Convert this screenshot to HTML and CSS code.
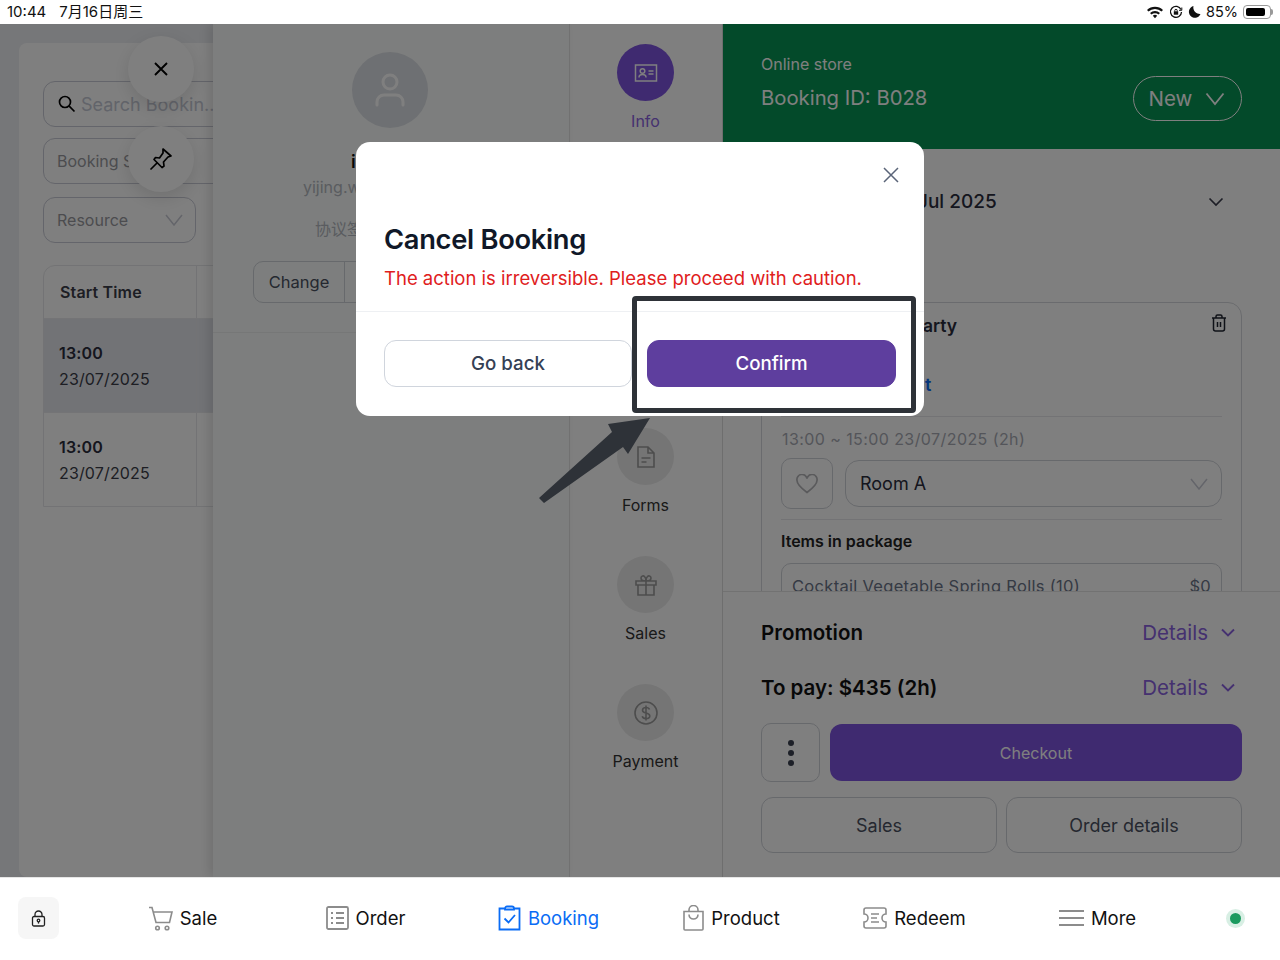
FILE: index.html
```html
<!DOCTYPE html>
<html lang="en">

<head>
  <meta charset="UTF-8" />
  <meta name="viewport" content="width=device-width, initial-scale=1.0" />
  <title>Cancel Booking</title>
  <link rel="stylesheet" href="styles.css">
</head>

<body>
  <div class="statusbar">
    <div class="status-left"><span>10:44</span><span>7月16日周三</span></div>
    <div class="status-right">
      <svg width="18" height="14" viewBox="0 0 18 14"><path d="M1 5a11.500 11.500 0 0 1 16 0l-1.500 1.600a9.300 9.300 0 0 0-13 0zM4 8a7.200 7.200 0 0 1 10 0l-1.500 1.600a5 5 0 0 0-7 0zM6.800 10.800a3.200 3.200 0 0 1 4.400 0L9 13.200z" fill="#111"/></svg>
      <svg width="14" height="14" viewBox="0 0 14 14" fill="none" stroke="#111"><path d="M12 4.500A5.500 5.500 0 1 0 12.500 7" stroke-width="1.300"/><path d="M12.800 2.500v2.800H10" stroke-width="1"/><rect x="4.800" y="6.300" width="4.400" height="3.400" fill="#111" stroke="none"/><path d="M5.800 6.500V5.500a1.200 1.200 0 0 1 2.400 0v1" stroke-width="1"/></svg>
      <svg width="13" height="14" viewBox="0 0 13 14"><path d="M5.500 1a6 6 0 1 0 7 8A6.500 6.500 0 0 1 5.500 1z" fill="#111"/></svg>
      <span>85%</span>
      <div class="battery"><div class="battery-level"></div></div>
    </div>
  </div>

  <div class="app">
    <aside class="sidebar">
      <div class="sidebar-panel">
        <div class="field search">
          <svg width="20" height="20" viewBox="0 0 20 20" fill="none" stroke="#000" stroke-width="1.700"><circle cx="8" cy="8" r="5.500"/><path d="M12.200 12.200l5.300 5.300"/></svg>
          <span class="placeholder">Search Bookin..</span>
        </div>
        <div class="field booking-field">Booking Status</div>
        <div class="field resource-field">
          <span>Resource</span>
          <svg class="select-arrow" width="18" height="12" viewBox="0 0 18 12" fill="none" stroke="#c8cad4" stroke-width="1.500"><path d="M1 1l8 10 8-10"/></svg>
        </div>
        <div class="table">
          <div class="table-row table-head">
            <div class="cell">Start Time</div>
            <div class="cell"></div>
          </div>
          <div class="table-row selected">
            <div class="cell"><b>13:00</b><span>23/07/2025</span></div>
            <div class="cell"></div>
          </div>
          <div class="table-row">
            <div class="cell"><b>13:00</b><span>23/07/2025</span></div>
            <div class="cell"></div>
          </div>
        </div>
      </div>
    </aside>

    <section class="profile">
      <div class="profile-top">
        <div class="avatar">
          <svg width="30" height="34" viewBox="0 0 30 34" fill="none" stroke="#fff" stroke-width="3" stroke-linecap="round"><circle cx="15" cy="9" r="7"/><path d="M2 32v-3a7 7 0 0 1 7-7h12a7 7 0 0 1 7 7v3"/></svg>
        </div>
        <div class="profile-name">i</div>
        <div class="profile-email">yijing.w</div>
        <div class="profile-note">协议签</div>
        <div class="btn-group"><div class="btn-part">Change</div><div class="btn-part wide"></div></div>
      </div>
    </section>

    <nav class="tabs">
      <div class="tab active">
        <div class="tab-circle">
          <svg width="24" height="20" viewBox="0 0 24 20" fill="none" stroke="#fff" stroke-width="1.500"><rect x="1.500" y="2" width="21" height="16"/><circle cx="8.500" cy="8" r="2.300"/><path d="M5 14.500c0-4 7-4 7 0M14.500 8h5M14.500 11h5"/></svg>
        </div>
        <span>Info</span>
      </div>
      <div class="tab"></div>
      <div class="tab"></div>
      <div class="tab">
        <div class="tab-circle">
          <svg width="20" height="24" viewBox="0 0 20 24" fill="none" stroke="#9a9a9a" stroke-width="1.600"><path d="M2 2h10l6 6v14H2zM12 2v6h6M5.500 13h9M5.500 17h5"/></svg>
        </div>
        <span>Forms</span>
      </div>
      <div class="tab">
        <div class="tab-circle">
          <svg width="22" height="22" viewBox="0 0 22 22" fill="none" stroke="#9a9a9a" stroke-width="1.600"><path d="M1 7h20v4H1zM3 11v10h16V11M11 7v14M11 7C7 7 6 5.500 6 4s2-3 3.500-1.500S11 7 11 7zM11 7c4 0 5-1.500 5-3s-2-3-3.500-1.500S11 7 11 7z"/></svg>
        </div>
        <span>Sales</span>
      </div>
      <div class="tab">
        <div class="tab-circle">
          <svg width="24" height="24" viewBox="0 0 24 24" fill="none" stroke="#9a9a9a" stroke-width="1.600"><circle cx="12" cy="12" r="11"/><path d="M15.500 8.500c-.5-1.500-2-2-3.500-2-2 0-3.500 1-3.500 2.700 0 3.800 7.300 2 7.300 5.700 0 1.700-1.700 2.600-3.800 2.600-1.800 0-3.300-.7-3.800-2.300M12 4.500v15"/></svg>
        </div>
        <span>Payment</span>
      </div>
    </nav>

    <main class="detail">
      <header class="detail-header">
        <div class="header-text">
          <div class="store-name">Online store</div>
          <div class="booking-id">Booking ID: B028</div>
        </div>
        <div class="new-btn">New
          <svg width="20" height="14" viewBox="0 0 20 14" fill="none" stroke="#fff" stroke-width="1.800"><path d="M1.500 1.500L10 12l8.500-10.500"/></svg>
        </div>
      </header>

      <div class="detail-scroll">
        <div class="date-row">
          <span>Jul 2025</span>
          <svg width="16" height="10" viewBox="0 0 16 10" fill="none" stroke="#3a3d4d" stroke-width="1.700"><path d="M1.500 1.500L8 8l6.500-6.500"/></svg>
        </div>
        <div class="card">
          <div class="card-title">
            <span>arty</span>
            <svg width="16" height="18" viewBox="0 0 16 18" fill="none" stroke="#1f2430" stroke-width="1.500"><path d="M1 4h14M5 4V2.500A1.500 1.500 0 0 1 6.500 1h3A1.500 1.500 0 0 1 11 2.500V4M2.500 4v11A2 2 0 0 0 4.500 17h7a2 2 0 0 0 2-2V4M6.500 8v5M9.500 8v5"/></svg>
          </div>
          <div class="card-link">t</div>
          <div class="card-time">13:00 ~ 15:00 23/07/2025 (2h)</div>
          <div class="room-row">
            <div class="heart-btn">
              <svg width="22" height="20" viewBox="0 0 22 20" fill="none" stroke="#b5b5b8" stroke-width="1.700"><path d="M11 18.500C5 14 1 10.500 1 6.500A5 5 0 0 1 11 4.500 5 5 0 0 1 21 6.500C21 10.500 17 14 11 18.500z"/></svg>
            </div>
            <div class="room-select">
              <span>Room A</span>
              <svg class="select-arrow" width="18" height="12" viewBox="0 0 18 12" fill="none" stroke="#c8cad4" stroke-width="1.500"><path d="M1 1l8 10 8-10"/></svg>
            </div>
          </div>
          <div class="items-title">Items in package</div>
          <div class="item-box"><span>Cocktail Vegetable Spring Rolls (10)</span><span>$0</span></div>
        </div>
      </div>

      <div class="detail-footer">
        <div class="sum-row">
          <span>Promotion</span>
          <div class="details-link">Details
            <svg width="14" height="9" viewBox="0 0 14 9" fill="none" stroke="#8a62e0" stroke-width="1.900"><path d="M1 1.500l6 6 6-6"/></svg>
          </div>
        </div>
        <div class="sum-row">
          <span>To pay: $435 (2h)</span>
          <div class="details-link">Details
            <svg width="14" height="9" viewBox="0 0 14 9" fill="none" stroke="#8a62e0" stroke-width="1.900"><path d="M1 1.500l6 6 6-6"/></svg>
          </div>
        </div>
        <div class="action-row">
          <div class="more-btn"><i></i><i></i><i></i></div>
          <div class="checkout-btn">Checkout</div>
        </div>
        <div class="second-row">
          <div class="second-btn">Sales</div>
          <div class="second-btn">Order details</div>
        </div>
      </div>
    </main>

    <div class="float-btn close-float">
      <svg width="16" height="16" viewBox="0 0 16 16" fill="none" stroke="#000" stroke-width="1.900"><path d="M2 2l12 12M14 2L2 14"/></svg>
    </div>
    <div class="float-btn pin-float">
      <svg width="24" height="24" viewBox="0 0 24 24" fill="none" stroke="#000" stroke-width="1.700" stroke-linejoin="round" stroke-linecap="round"><path d="M14 2l8 7-3 1-4.500 5 .5 4-2 1.500-8-8L6.500 10.500l4 .5L14 6z"/><path d="M8 16l-6 6"/></svg>
    </div>

    <div class="overlay"></div>
  </div>

  <div class="bottom-nav">
    <div class="lock-btn">
      <svg width="15" height="17" viewBox="0 0 15 17" fill="none" stroke="#222" stroke-width="1.300"><rect x="1.500" y="6.500" width="12" height="9.500" rx="1.500"/><path d="M4 6.500V4.500a3.500 3.500 0 0 1 7 0v2"/><circle cx="7.500" cy="10.500" r="1.300"/><path d="M7.500 11.800v1.800"/></svg>
    </div>
    <div class="nav-items">
      <div class="nav-item">
        <svg width="25" height="25" viewBox="0 0 25 25" fill="none" stroke="#8c8c8c" stroke-width="1.600"><path d="M1 1.500h3l4 15h13.500L24 6H5.500"/><circle cx="9.500" cy="22" r="1.800"/><circle cx="19" cy="22" r="1.800"/></svg>
        <span>Sale</span>
      </div>
      <div class="nav-item">
        <svg width="23" height="24" viewBox="0 0 23 24" fill="none" stroke="#8c8c8c" stroke-width="1.800"><rect x="1" y="1" width="21" height="22" rx="1.500"/><path d="M5 7h2M10 7h8M5 12h2M10 12h8M5 17h2M10 17h8"/></svg>
        <span>Order</span>
      </div>
      <div class="nav-item current">
        <svg width="23" height="26" viewBox="0 0 23 26" fill="none" stroke="#0a6cf5" stroke-width="1.800"><path d="M7 3.500H1.500v21h20v-21H16M7 3.500a2 2 0 0 1 2-2h5a2 2 0 0 1 2 2v1H7z"/><path d="M6.500 13.500l4 4 6.500-7.500"/></svg>
        <span>Booking</span>
      </div>
      <div class="nav-item">
        <svg width="21" height="26" viewBox="0 0 21 26" fill="none" stroke="#8c8c8c" stroke-width="1.600"><path d="M1 6.500h19V24a1 1 0 0 1-1 1H2a1 1 0 0 1-1-1zM6 6.500V5a4.500 4.500 0 0 1 9 0v1.500M6 9.500c0 6 9 6 9 0"/></svg>
        <span>Product</span>
      </div>
      <div class="nav-item">
        <svg width="24" height="22" viewBox="0 0 24 22" fill="none" stroke="#8c8c8c" stroke-width="1.600"><path d="M3 1h18a2 2 0 0 1 2 2v4a4 4 0 0 0 0 8v4a2 2 0 0 1-2 2H3a2 2 0 0 1-2-2v-4a4 4 0 0 0 0-8V3a2 2 0 0 1 2-2zM8 7h8M8 11h6M8 15h8"/></svg>
        <span>Redeem</span>
      </div>
      <div class="nav-item">
        <svg width="25" height="18" viewBox="0 0 25 18" fill="none" stroke="#8c8c8c" stroke-width="1.800"><path d="M0 2h25M0 9h25M0 16h25"/></svg>
        <span>More</span>
      </div>
    </div>
    <div class="online-dot"></div>
  </div>

  <div class="modal">
    <div class="modal-top">
      <svg class="modal-close" width="16" height="16" viewBox="0 0 16 16" fill="none" stroke="#5a6478" stroke-width="1.500"><path d="M1 1l14 14M15 1L1 15"/></svg>
      <h2>Cancel Booking</h2>
      <p>The action is irreversible. Please proceed with caution.</p>
    </div>
    <div class="modal-actions">
      <button class="btn-back">Go back</button>
      <button class="btn-confirm">Confirm</button>
    </div>
  </div>

  <!-- annotation drawn on the screenshot -->
  <div class="mark-box"></div>
  <svg class="mark-arrow" width="1280" height="960" viewBox="0 0 1280 960"><polygon points="650,418 608,424 612,432 539,498 544,503 623,447 628,454" fill="#2e3238"/></svg>
</body>

</html>
```

FILE: styles.css
```css
* {
  box-sizing: border-box;
}

html,
body {
  margin: 0;
  height: 100%;
}

body {
  position: relative;
  width: 1280px;
  height: 960px;
  overflow: hidden;
  font-family: 'Inter', 'Noto Sans CJK SC', sans-serif;
  background: #fff;
  color: #000;
}

.statusbar {
  height: 24px;
  padding: 0 8px 0 7px;
  display: flex;
  justify-content: space-between;
  align-items: center;
  font-size: 15px;
  line-height: 24px;
  color: #111;
  background: #fff;
}

.status-left {
  display: flex;
  gap: 13px;
}

.status-right {
  display: flex;
  align-items: center;
  gap: 5px;
}

.status-right span {
  font-size: 14.500px;
}

.battery {
  position: relative;
  width: 28px;
  height: 14px;
  margin-right: 1px;
  padding: 2px;
  border: 1px solid #999;
  border-radius: 4px;
}

.battery::after {
  content: "";
  position: absolute;
  right: -3px;
  top: 3px;
  width: 2px;
  height: 6px;
  background: #999;
  border-radius: 0 2px 2px 0;
}

.battery-level {
  width: 85%;
  height: 100%;
  background: #000;
  border-radius: 2px;
}

.app {
  position: relative;
  height: 853px;
  display: flex;
  overflow: hidden;
}

.overlay {
  position: absolute;
  inset: 0;
  z-index: 5;
  background: rgba(0, 0, 0, 0.5);
}

/* left list */
.sidebar {
  width: 213px;
  flex-shrink: 0;
  padding: 19px 0 0 19px;
  overflow: hidden;
  background: #eceef2;
}

.sidebar-panel {
  width: 330px;
  height: 100%;
  padding: 38px 24px 0;
  background: #fff;
  border-radius: 8px 0 0 8px;
}

.field {
  height: 46px;
  padding: 0 13px;
  display: flex;
  align-items: center;
  font-size: 16px;
  color: #98999e;
  border: 1px solid #c9cbd6;
  border-radius: 12px;
}

.search {
  width: 240px;
  gap: 4px;
  margin-bottom: 11px;
}

.placeholder {
  font-size: 18px;
  color: #c4c8d4;
  white-space: nowrap;
}

.booking-field {
  width: 240px;
  margin-bottom: 13px;
}

.resource-field {
  width: 153px;
  margin-bottom: 22px;
  justify-content: space-between;
}

.select-arrow {
  margin-right: -1px;
}

.table {
  width: 300px;
  border: 1px solid #e6e7ea;
  border-radius: 12px 0 0 0;
  overflow: hidden;
}

.table-row {
  height: 94px;
  display: flex;
}

.table-row + .table-row {
  border-top: 1px solid #e8e9ec;
}

.table-head {
  height: 52px;
  font-size: 16px;
  font-weight: 600;
  color: #333;
}

.table-head .cell {
  padding: 0 0 0 16px;
}

.selected {
  background: #e4e6ec;
}

.cell {
  width: 153px;
  flex-shrink: 0;
  padding: 0 0 0 15px;
  display: flex;
  flex-direction: column;
  justify-content: center;
  gap: 6px;
  border-right: 1px solid #e6e7ea;
  font-size: 16px;
  color: #3a3c48;
  letter-spacing: 0.15px;
}

.cell b {
  font-weight: 600;
  color: #2a2c3c;
}

.cell:last-child {
  border-right: 0;
}

/* customer column */
.profile {
  position: relative;
  z-index: 1;
  width: 356px;
  flex-shrink: 0;
  background: #fafdfc;
  box-shadow: -4px 0 10px rgba(0, 0, 0, 0.12);
}

.profile-top {
  height: 309px;
  padding-top: 28px;
  border-bottom: 1px solid #eceeee;
}

.avatar {
  width: 76px;
  height: 76px;
  margin-left: 139px;
  display: flex;
  align-items: center;
  justify-content: center;
  background: #dde0e6;
  border-radius: 50%;
}

.profile-name {
  margin: 23px 0 0 138px;
  font-size: 18px;
  font-weight: 600;
  color: #111;
}

.profile-email {
  margin: 5px 0 0 90px;
  font-size: 16px;
  color: #b4b8c0;
}

.profile-note {
  margin: 19px 0 0 102px;
  font-size: 16px;
  color: #b4b8c0;
}

.btn-group {
  width: 276px;
  height: 42px;
  margin: 21px 0 0 40px;
  display: flex;
  font-size: 16.500px;
  color: #4a5060;
  border: 1px solid #cfd2d8;
  border-radius: 10px;
}

.btn-part {
  width: 91px;
  display: flex;
  align-items: center;
  justify-content: center;
  border-right: 1px solid #cfd2d8;
}

.wide {
  flex: 1;
  border-right: 0;
}

/* step tabs */
.tabs {
  width: 153px;
  flex-shrink: 0;
  padding: 20px 1px 0 0;
  background: #fff;
  border-left: 1px solid #e8e8e8;
}

.tab {
  height: 128px;
  display: flex;
  flex-direction: column;
  align-items: center;
  gap: 10px;
  font-size: 16px;
  color: #333;
}

.tab-circle {
  width: 57px;
  height: 57px;
  display: flex;
  align-items: center;
  justify-content: center;
  background: #ebebeb;
  border-radius: 50%;
}

.tab.active {
  color: #8a62e0;
}

.tab.active .tab-circle {
  background: #7e54e0;
}

/* booking detail */
.detail {
  flex: 1;
  display: flex;
  flex-direction: column;
  background: #fff;
  border-left: 1px solid #ddd;
}

.detail-header {
  height: 125px;
  padding: 0 38px;
  display: flex;
  align-items: center;
  justify-content: space-between;
  color: #fff;
  background: #069454;
}

.header-text {
  padding-bottom: 9px;
}

.store-name {
  font-size: 16px;
  margin-bottom: 11px;
}

.booking-id {
  font-size: 20.300px;
}

.new-btn {
  width: 109px;
  height: 45px;
  margin-top: 24px;
  padding-right: 1px;
  display: flex;
  align-items: center;
  justify-content: center;
  gap: 13px;
  font-size: 20.500px;
  border: 1.500px solid #fff;
  border-radius: 23px;
}

.detail-scroll {
  height: 442px;
  padding: 0 38px;
  overflow: hidden;
}

.date-row {
  height: 153px;
  padding: 41px 18px 0 156px;
  display: flex;
  justify-content: space-between;
  align-items: flex-start;
  font-size: 19px;
  font-weight: 500;
  color: #2a2c3c;
}

.date-row svg {
  margin-top: 7px;
}

.card {
  padding: 0 19px;
  border: 1px solid #d5d7dc;
  border-radius: 14px 14px 0 0;
}

.card-title {
  height: 59px;
  padding: 12px 0 0 142px;
  display: flex;
  justify-content: space-between;
  font-size: 17.500px;
  font-weight: 600;
  color: #2a2c3c;
}

.card-title svg {
  margin-right: -5px;
  margin-top: -1px;
}

.card-link {
  height: 55px;
  padding: 12px 0 0 144px;
  font-size: 18px;
  font-weight: 600;
  color: #0a6cf5;
  border-bottom: 1px solid #e6e7ea;
}

.card-time {
  margin: 12px 0 0 1px;
  font-size: 16px;
  letter-spacing: 0.42px;
  color: #a8abb4;
}

.room-row {
  margin-top: 9px;
  padding-bottom: 10px;
  display: flex;
  align-items: center;
  gap: 12px;
  border-bottom: 1px solid #e6e7ea;
}

.heart-btn {
  width: 52px;
  height: 51px;
  display: flex;
  align-items: center;
  justify-content: center;
  border: 1px solid #cfd2d8;
  border-radius: 10px;
}

.room-select {
  flex: 1;
  height: 47px;
  padding: 0 14px;
  display: flex;
  align-items: center;
  justify-content: space-between;
  font-size: 18px;
  color: #2a2c3c;
  border: 1px solid #cfd2d8;
  border-radius: 14px;
}

.items-title {
  margin-top: 11px;
  font-size: 16px;
  font-weight: 600;
  color: #222;
}

.item-box {
  height: 60px;
  margin-top: 12px;
  padding: 12px 10px 0;
  display: flex;
  justify-content: space-between;
  font-size: 16.500px;
  letter-spacing: 0.3px;
  color: #6b7488;
  border: 1px solid #cfd2d8;
  border-radius: 10px 10px 0 0;
}

.detail-footer {
  flex: 1;
  padding: 13px 38px 0;
  background: #fff;
  border-top: 1px solid #e4e4e4;
  position: relative;
}

.sum-row {
  height: 55px;
  display: flex;
  align-items: center;
  justify-content: space-between;
  font-size: 20.500px;
  font-weight: 600;
  color: #111;
}

.details-link {
  display: flex;
  align-items: center;
  gap: 13px;
  padding-right: 7px;
  font-weight: 400;
  color: #8a62e0;
}

.action-row {
  margin-top: 8px;
  display: flex;
  align-items: center;
  gap: 10px;
}

.more-btn {
  width: 59px;
  height: 59px;
  display: flex;
  flex-direction: column;
  align-items: center;
  justify-content: center;
  gap: 4px;
  border: 1px solid #cfd2d8;
  border-radius: 10px;
}

.more-btn i {
  width: 6px;
  height: 6px;
  background: #3a4050;
  border-radius: 50%;
}

.checkout-btn {
  flex: 1;
  height: 57px;
  display: flex;
  align-items: center;
  justify-content: center;
  font-size: 16px;
  color: #fff;
  background: #7e54e0;
  border-radius: 12px;
}

.second-row {
  margin-top: 15px;
  display: flex;
  gap: 9px;
}

.second-btn {
  flex: 1;
  height: 56px;
  display: flex;
  align-items: center;
  justify-content: center;
  font-size: 18px;
  color: #4a5060;
  border: 1px solid #cfd2d8;
  border-radius: 12px;
}

.float-btn {
  position: absolute;
  left: 128px;
  z-index: 2;
  width: 66px;
  height: 66px;
  display: flex;
  align-items: center;
  justify-content: center;
  background: #fff;
  border-radius: 50%;
  box-shadow: 0 6px 18px rgba(0, 0, 0, 0.12);
}

.close-float {
  top: 12px;
}

.pin-float {
  top: 102px;
}

/* bottom bar */
.bottom-nav {
  height: 83px;
  padding: 0 0 2px 18px;
  display: flex;
  align-items: center;
  background: #fff;
  border-top: 1px solid #e6e6e6;
}

.lock-btn {
  width: 41px;
  height: 42px;
  display: flex;
  align-items: center;
  justify-content: center;
  background: #f6f6f6;
  border-radius: 8px;
}

.nav-items {
  width: 1098px;
  margin-left: 32px;
  display: grid;
  grid-template-columns: repeat(6, 1fr);
}

.nav-item {
  display: flex;
  align-items: center;
  justify-content: center;
  gap: 7px;
  font-size: 18.500px;
  color: #111;
}

.nav-item.current {
  color: #0a6cf5;
}

.online-dot {
  width: 11px;
  height: 11px;
  margin-left: 41px;
  background: #1a9a5e;
  border-radius: 50%;
  box-shadow: 0 0 0 4px #d8efe4;
}

/* dialog */
.modal {
  position: absolute;
  left: 356px;
  top: 142px;
  z-index: 10;
  width: 568px;
  height: 274px;
  background: #fff;
  border-radius: 14px;
}

.modal-top {
  position: relative;
  height: 170px;
  padding: 78px 28px 0;
  border-bottom: 1px solid #eef0f3;
}

.modal-close {
  position: absolute;
  right: 25px;
  top: 25px;
}

.modal h2 {
  margin: 0;
  font-size: 27.300px;
  line-height: 40px;
  font-weight: 600;
  letter-spacing: -0.3px;
  color: #101828;
}

.modal p {
  margin: 6px 0 0;
  font-size: 18.500px;
  line-height: 24px;
  color: #e0201c;
}

.modal-actions {
  padding: 28px 28px 0;
  display: flex;
  gap: 15px;
}

.modal button {
  height: 47px;
  font-family: inherit;
  font-size: 18.700px;
  font-weight: 500;
  border-radius: 12px;
}

.btn-back {
  flex: 1;
  color: #344054;
  background: #fff;
  border: 1px solid #d0d5dd;
}

.btn-confirm {
  flex: 0 0 249px;
  color: #fff;
  background: #5e3e9e;
  border: 1px solid #5e3e9e;
}

.mark-box {
  position: absolute;
  left: 632px;
  top: 296px;
  z-index: 11;
  width: 284px;
  height: 117px;
  border: 5px solid #2e3238;
  border-radius: 4px;
}

.mark-arrow {
  position: absolute;
  left: 0;
  top: 0;
  z-index: 11;
}
```
